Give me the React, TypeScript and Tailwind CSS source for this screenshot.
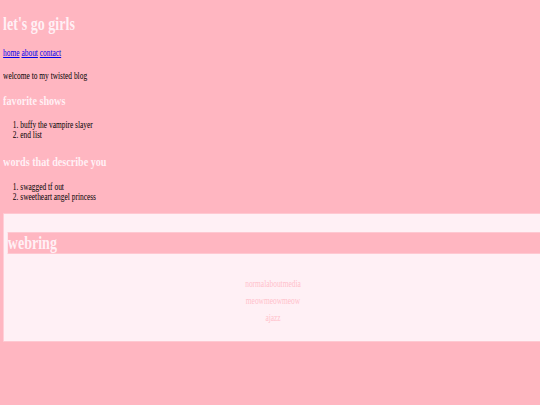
import React from 'react';

const shows = ['buffy the vampire slayer', 'end list'];
const words = ['swagged tf out', 'sweetheart angel princess'];
const ring = ['normalaboutmedia', 'meowmeowmeow', 'ajazz'];

// the page text in the shot is horizontally squished, so the whole sheet is scaled on x
const App: React.FC = () => {
  return (
    <div className="h-screen w-full overflow-hidden bg-[#ffb6c1] font-['Liberation_Serif',serif] text-black">
      <div className="w-[700px] origin-top-left scale-x-[0.78] px-[4px] pt-[14px]">
        <h1 className="text-[18px] leading-[20px] font-bold text-[#fff0f5]">let's go girls</h1>

        <nav className="mt-[14px] text-[9.5px] leading-[10px]">
          <a href="#" className="text-[#0000ee] underline">home</a>{' '}
          <a href="#" className="text-[#0000ee] underline">about</a>{' '}
          <a href="#" className="text-[#0000ee] underline">contact</a>
        </nav>

        <p className="mt-[13px] text-[9.5px] leading-[10px]">welcome to my twisted blog</p>

        <h2 className="mt-[12px] text-[13px] leading-[15px] font-bold text-[#fff0f5]">favorite shows</h2>
        <ol className="mt-[12px] list-decimal pl-[22px] text-[9.5px] leading-[10px]">
          {shows.map(s => (
            <li key={s}>{s}</li>
          ))}
        </ol>

        <h2 className="mt-[14px] text-[13px] leading-[15px] font-bold text-[#fff0f5]">words that describe you</h2>
        <ol className="mt-[13px] list-decimal pl-[22px] text-[9.5px] leading-[10px]">
          {words.map(w => (
            <li key={w}>{w}</li>
          ))}
        </ol>

        <section className="mt-[11px] border border-[#ffc8d1] bg-[#fff0f5] pt-[18px] pb-[14px]">
          <div className="ml-[5px] h-[22px] border-y border-[#ffc8d1] bg-[#ffb6c1] text-[18px] leading-[20px] font-bold text-[#fff0f5]">
            webring
          </div>
          <div className="mt-[22px] flex flex-col items-center text-[9.5px] leading-[17px] text-[#ffc0cb]">
            {ring.map(r => (
              <a key={r} href="#">{r}</a>
            ))}
          </div>
        </section>
      </div>
    </div>
  );
};

export default App;
